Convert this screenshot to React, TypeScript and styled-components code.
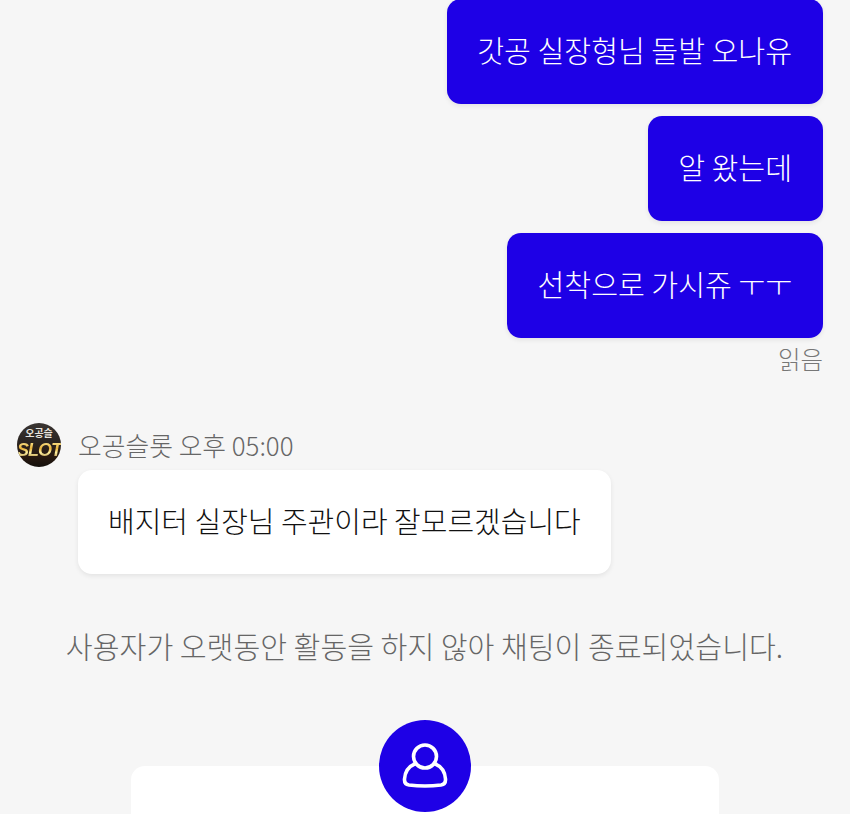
import React from 'react';
import styled, { createGlobalStyle } from 'styled-components';

const GlobalStyle = createGlobalStyle`
  html, body {
    margin: 0;
    padding: 0;
    background: #f6f6f6;
  }
  body {
    font-family: 'Noto Sans CJK KR', 'Noto Sans', sans-serif;
  }
`;

const sentMessages = ['갓공 실장형님 돌발 오나유', '알 왔는데', '선착으로 가시쥬 ㅜㅜ'];

const App = () => {
  return (
    <Page>
      <GlobalStyle />
      <SentGroup>
        {sentMessages.map((message) => (
          <SentBubble key={message}>{message}</SentBubble>
        ))}
        <ReadMark>읽음</ReadMark>
      </SentGroup>

      <AgentHeader>
        <Avatar>
          <AvatarTop>오공슬</AvatarTop>
          <AvatarLogo>SLOT</AvatarLogo>
        </Avatar>
        <AgentMeta>오공슬롯 오후 05:00</AgentMeta>
      </AgentHeader>
      <ReceivedBubble>배지터 실장님 주관이라 잘모르겠습니다</ReceivedBubble>

      <SystemNotice>사용자가 오랫동안 활동을 하지 않아 채팅이 종료되었습니다.</SystemNotice>

      <ProfileCard>
        <ProfileBadge>
          <svg width="46" height="46" viewBox="0 0 46 46" fill="none" stroke="#fff" strokeWidth="3.6" strokeLinejoin="round">
            <circle cx="23" cy="13.5" r="11.5" />
            <path d="M13.5 20.5C7.5 23 3 28 2.5 36C2.3 39.5 3.5 41.5 7 42C17 43.2 29 43.2 39 42C42.5 41.5 43.7 39.5 43.5 36C43 28 38.5 23 32.5 20.5" />
          </svg>
        </ProfileBadge>
      </ProfileCard>
    </Page>
  );
};

const Page = styled.div`
  height: 814px;
  overflow: hidden;
  box-sizing: border-box;
  position: relative;
  background: #f6f6f6;
`;

const SentGroup = styled.div`
  display: flex;
  flex-direction: column;
  align-items: flex-end;
  gap: 12.5px;
  margin-top: -1px;
  padding-right: 27px;
`;

const Bubble = styled.div`
  height: 104.5px;
  box-sizing: border-box;
  display: flex;
  align-items: center;
  padding: 0 31px 3px 30px;
  border-radius: 14px;
  font-size: 29.2px;
  font-weight: 300;
  line-height: 1;
  white-space: nowrap;
  box-shadow: 0 2px 5px rgba(0, 0, 0, 0.08);
`;

const SentBubble = styled(Bubble)`
  background: #1e00e6;
  color: #fff;
`;

const ReadMark = styled.div`
  margin-top: -6px;
  font-size: 24.5px;
  font-weight: 300;
  line-height: 30px;
  color: #777;
`;

const AgentHeader = styled.div`
  display: flex;
  align-items: center;
  gap: 17px;
  margin-top: 49px;
  padding-left: 17px;
`;

const Avatar = styled.div`
  width: 44px;
  height: 44px;
  border-radius: 50%;
  overflow: hidden;
  flex: none;
  display: flex;
  flex-direction: column;
  align-items: center;
  background: linear-gradient(180deg, #3a3532 0%, #2b2522 40%, #2a1a10 75%, #14100c 100%);
`;

const AvatarTop = styled.span`
  margin-top: 2px;
  font-size: 10px;
  line-height: 15px;
  font-weight: 700;
  color: #e8e4de;
  white-space: nowrap;
`;

const AvatarLogo = styled.span`
  font-family: 'Liberation Sans', sans-serif;
  font-size: 18px;
  line-height: 21px;
  font-weight: 700;
  font-style: italic;
  letter-spacing: -1px;
  white-space: nowrap;
  background: linear-gradient(180deg, #fff2a8 0%, #e8b23a 40%, #fff0a0 60%, #8a5a14 100%);
  -webkit-background-clip: text;
  background-clip: text;
  color: transparent;
`;

const AgentMeta = styled.div`
  font-size: 25.8px;
  font-weight: 300;
  line-height: 30px;
  color: #666;
  white-space: nowrap;
`;

const ReceivedBubble = styled(Bubble)`
  width: fit-content;
  height: 104px;
  margin: 3px 0 0 78px;
  padding: 0 30px 3px;
  font-size: 29px;
  background: #fff;
  color: #111;
`;

const SystemNotice = styled.div`
  margin-top: 51.5px;
  padding-right: 1px;
  text-align: center;
  font-size: 29.2px;
  font-weight: 300;
  line-height: 38px;
  color: #666;
  white-space: nowrap;
`;

const ProfileCard = styled.div`
  position: relative;
  width: 588px;
  height: 200px;
  margin: 102px auto 0;
  background: #fff;
  border-radius: 14px;
`;

const ProfileBadge = styled.div`
  position: absolute;
  left: 50%;
  top: -46px;
  width: 92px;
  height: 92px;
  transform: translateX(-50%);
  border-radius: 50%;
  background: #1e00e6;
  display: flex;
  align-items: center;
  justify-content: center;
`;

export default App;
